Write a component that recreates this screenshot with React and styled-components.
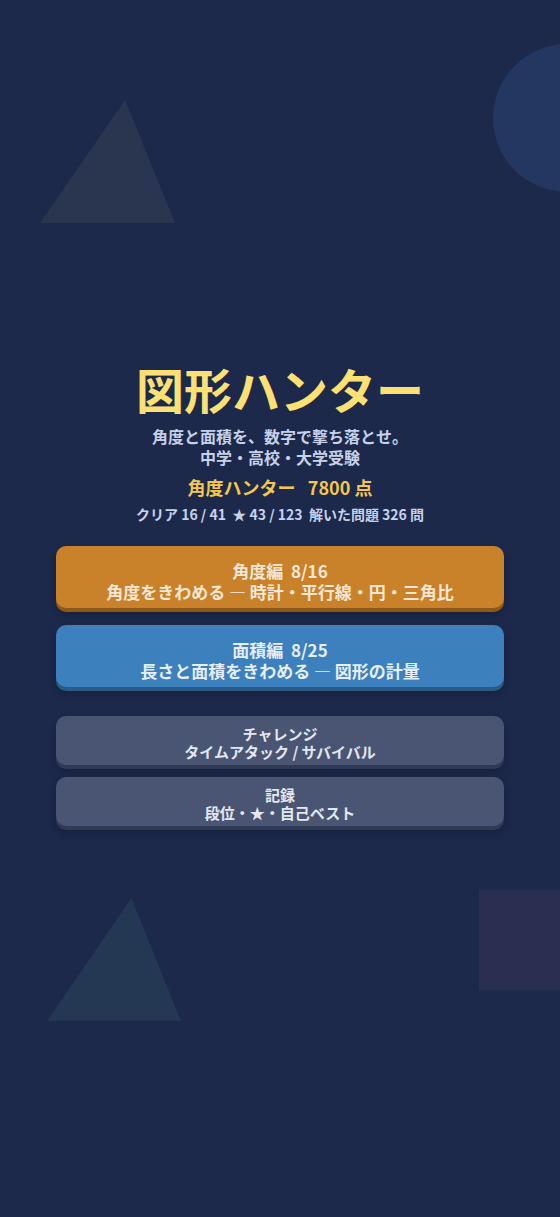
import React from "react";
import styled, { createGlobalStyle } from "styled-components";

const GlobalStyle = createGlobalStyle`
  html, body {
    margin: 0;
    padding: 0;
    background: #1c294b;
  }
  body {
    font-family: "Noto Sans CJK JP", "Noto Sans", sans-serif;
  }
`;

const Page = styled.div`
  position: relative;
  width: 100%;
  height: 1217px;
  overflow: hidden;
  background: #1c294b;
  display: flex;
  flex-direction: column;
  align-items: center;
  padding-top: 356px;
  box-sizing: border-box;
`;

const Deco = styled.div`
  position: absolute;
  pointer-events: none;
`;

const Triangle = styled(Deco)`
  width: ${(p) => p.$w}px;
  height: ${(p) => p.$h}px;
  left: ${(p) => p.$x}px;
  top: ${(p) => p.$y}px;
  background: ${(p) => p.$color};
  clip-path: polygon(63% 0, 100% 100%, 0 100%);
`;

const Circle = styled(Deco)`
  width: 148px;
  height: 148px;
  left: 493px;
  top: 44px;
  border-radius: 50%;
  background: #233760;
`;

const Square = styled(Deco)`
  width: 100px;
  height: 100px;
  left: 479px;
  top: 890px;
  background: #2a2e50;
`;

const Content = styled.div`
  position: relative;
  width: 448px;
  display: flex;
  flex-direction: column;
  align-items: center;
`;

const Title = styled.h1`
  margin: 0;
  font-size: 48px;
  line-height: 64px;
  font-weight: 700;
  color: #fde074;
`;

const Tagline = styled.p`
  margin: 6px 0 0;
  font-size: 16px;
  line-height: 21px;
  font-weight: 700;
  color: #c7d2ea;
  text-align: center;
`;

const Score = styled.div`
  margin-top: 7px;
  font-size: 18px;
  line-height: 24px;
  font-weight: 700;
  color: #f5c74f;
  white-space: pre;
`;

const Stats = styled.div`
  margin-top: 6px;
  font-size: 14px;
  line-height: 18px;
  font-weight: 700;
  color: #c7d2ea;
  white-space: pre;
`;

const Menu = styled.div`
  width: 100%;
  display: flex;
  flex-direction: column;
  gap: ${(p) => p.$gap}px;
  margin-top: ${(p) => p.$top}px;
`;

const Button = styled.button`
  width: 100%;
  border: none;
  border-radius: 10px;
  padding: ${(p) => (p.$small ? "9px 12px 4px" : "14px 12px 6px")};
  background: ${(p) => p.$bg};
  box-shadow: 0 4px 0 ${(p) => p.$edge}, 0 6px 10px rgba(0, 0, 0, 0.25);
  color: ${(p) => p.$fg};
  font-family: inherit;
  font-size: ${(p) => (p.$small ? 15 : 17)}px;
  line-height: ${(p) => (p.$small ? 18 : 21)}px;
  font-weight: 700;
  text-align: center;
  cursor: pointer;
`;

const Line = styled.span`
  display: block;
  white-space: pre;
`;

const App = () => (
  <>
    <GlobalStyle />
    <Page>
      <Triangle $x={40} $y={100} $w={135} $h={123} $color="#2a3650" />
      <Circle />
      <Triangle $x={47} $y={898} $w={134} $h={123} $color="#243753" />
      <Square />
      <Content>
        <Title>図形ハンター</Title>
        <Tagline>
          角度と面積を、数字で撃ち落とせ。
          <br />
          中学・高校・大学受験
        </Tagline>
        <Score>{"角度ハンター   7800 点"}</Score>
        <Stats>{"クリア 16 / 41  ★ 43 / 123  解いた問題 326 問"}</Stats>
        <Menu $gap={17} $top={23}>
          <Button $bg="#c9822a" $edge="#8f581b" $fg="#f5e7d5">
            <Line>{"角度編  8/16"}</Line>
            <Line>角度をきわめる ― 時計・平行線・円・三角比</Line>
          </Button>
          <Button $bg="#3c80bd" $edge="#295a88" $fg="#e6eef7">
            <Line>{"面積編  8/25"}</Line>
            <Line>長さと面積をきわめる ― 図形の計量</Line>
          </Button>
        </Menu>
        <Menu $gap={12} $top={29}>
          <Button $small $bg="#4a5573" $edge="#303a55" $fg="#e3e7f0">
            <Line>チャレンジ</Line>
            <Line>タイムアタック / サバイバル</Line>
          </Button>
          <Button $small $bg="#4a5573" $edge="#303a55" $fg="#e3e7f0">
            <Line>記録</Line>
            <Line>段位・★・自己ベスト</Line>
          </Button>
        </Menu>
      </Content>
    </Page>
  </>
);

export default App;
